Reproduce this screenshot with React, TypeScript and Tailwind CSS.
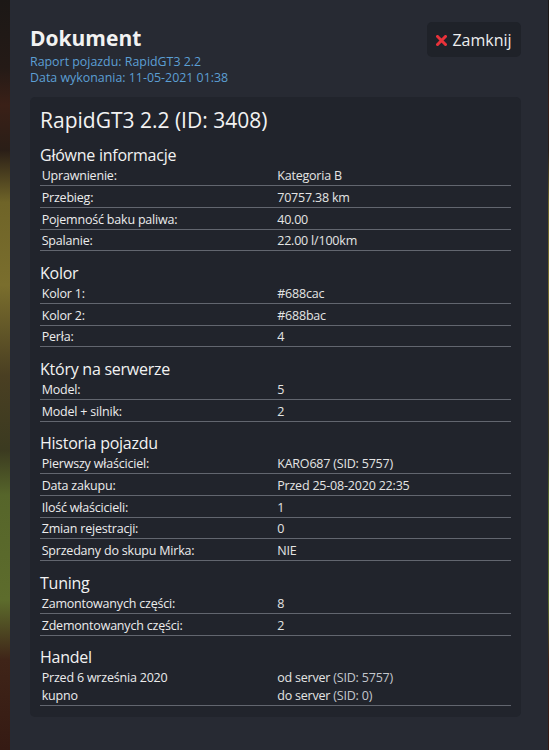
import React from "react";

type Row = { label: React.ReactNode; value: React.ReactNode };

const sections: { title: string; rows: Row[] }[] = [
  {
    title: "Główne informacje",
    rows: [
      { label: "Uprawnienie:", value: "Kategoria B" },
      { label: "Przebieg:", value: "70757.38 km" },
      { label: "Pojemność baku paliwa:", value: "40.00" },
      { label: "Spalanie:", value: "22.00 l/100km" },
    ],
  },
  {
    title: "Kolor",
    rows: [
      { label: "Kolor 1:", value: "#688cac" },
      { label: "Kolor 2:", value: "#688bac" },
      { label: "Perła:", value: "4" },
    ],
  },
  {
    title: "Który na serwerze",
    rows: [
      { label: "Model:", value: "5" },
      { label: "Model + silnik:", value: "2" },
    ],
  },
  {
    title: "Historia pojazdu",
    rows: [
      { label: "Pierwszy właściciel:", value: "KARO687 (SID: 5757)" },
      { label: "Data zakupu:", value: "Przed 25-08-2020 22:35" },
      { label: "Ilość właścicieli:", value: "1" },
      { label: "Zmian rejestracji:", value: "0" },
      { label: "Sprzedany do skupu Mirka:", value: "NIE" },
    ],
  },
  {
    title: "Tuning",
    rows: [
      { label: "Zamontowanych części:", value: "8" },
      { label: "Zdemontowanych części:", value: "2" },
    ],
  },
  {
    title: "Handel",
    rows: [
      {
        label: (
          <>
            Przed 6 września 2020
            <br />
            kupno
          </>
        ),
        value: (
          <>
            od server <span className="text-[#c4c7cc]">(SID: 5757)</span>
            <br />
            do server <span className="text-[#c4c7cc]">(SID: 0)</span>
          </>
        ),
      },
    ],
  },
];

export default function App() {
  return (
    <div
      className="w-[549px] h-[750px] flex overflow-hidden bg-[linear-gradient(to_bottom,#1c1816_0%,#241a16_9%,#3a2017_14%,#2a1e17_20%,#6f6428_27%,#7a6e2d_38%,#4a3f22_50%,#3b3a20_60%,#56652a_66%,#5d6c2c_80%,#3f2418_88%,#351a13_100%)]"
      style={{ fontFamily: '"Open Sans", "Noto Sans", sans-serif' }}
    >
      <div className="ml-[10px] w-[538px] h-full bg-[#272a33] pl-[20px] pt-[25px]">
        <div className="flex justify-between w-[491px]">
          <div>
            <h1 className="text-[21px] leading-[26px] font-bold text-[#f2f2f2]">
              Dokument
            </h1>
            <div className="mt-[3px] text-[12.4px] leading-[16px] text-[#5c9fd3]">
              Raport pojazdu: RapidGT3 2.2
            </div>
            <div className="text-[12.4px] leading-[16px] text-[#5c9fd3]">
              Data wykonania: 11-05-2021 01:38
            </div>
          </div>
          <button className="mt-[-2.7px] h-[35px] w-[94px] rounded-[5px] bg-[#1f2229] flex items-center justify-center gap-[5px] text-[16px] text-[#eeeeee]">
            <svg width="11" height="11" viewBox="0 0 11 11" className="mt-[1px]">
              <path d="M1.5 1.5 L9.5 9.5 M9.5 1.5 L1.5 9.5" stroke="#e8323a" strokeWidth="3" strokeLinecap="square" />
            </svg>
            <span>Zamknij</span>
          </button>
        </div>

        <div className="mt-[10.5px] w-[491px] rounded-[5px] bg-[#21242c] px-[10px] pt-[10px] pb-[11px]">
          <div className="text-[21px] leading-[27px] text-[#f2f2f2]">
            RapidGT3 2.2 (ID: 3408)
          </div>
          <div className="mt-[0.5px]">
            {sections.map((s) => (
              <div key={s.title} className="mt-[12.5px] w-[471px]">
                <div className="text-[16px] leading-[18.5px] tracking-[-0.25px] text-[#f2f2f2]">
                  {s.title}
                </div>
                {s.rows.map((r, i) => (
                  <div
                    key={i}
                    className="grid grid-cols-2 border-b border-[#62666f] pt-[2.7px] text-[12.5px] leading-[18px] tracking-[-0.2px] text-[#ececec]"
                  >
                    <div className="pl-[1.7px]">{r.label}</div>
                    <div className="pl-[1.7px] text-[#e4e4e4]">{r.value}</div>
                  </div>
                ))}
              </div>
            ))}
          </div>
        </div>
      </div>
    </div>
  );
}
